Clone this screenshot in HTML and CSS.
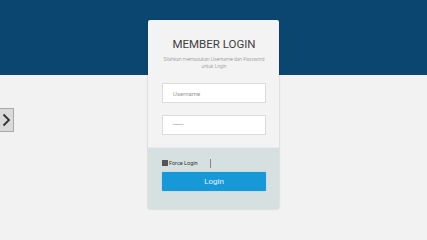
FILE: index.html
```html
<!DOCTYPE html>
<html>
<head>
<meta charset="utf-8">
<link rel="stylesheet" href="styles.css">
</head>
<body>
<div class="top"></div>
<div class="stage">
  <div class="card">
    <div class="card-body">
      <h1 class="title">MEMBER LOGIN</h1>
      <p class="sub">Silahkan memasukan Username dan Password<br>untuk Login</p>
      <div class="field"><span class="ph">Username</span></div>
      <div class="field"><span class="dots">••••••••</span></div>
    </div>
    <div class="card-foot">
      <div class="row">
        <span class="check"></span><span class="lbl">Force Login</span><span class="bar"></span>
      </div>
      <div class="btn">Login</div>
    </div>
  </div>
</div>
<div class="side">
  <svg width="9" height="14" viewBox="0 0 9 14"><path d="M1.5 1.5 L7 7 L1.5 12.5" fill="none" stroke="#333" stroke-width="1.8"/></svg>
</div>
</body>
</html>
```
FILE: styles.css
```css
html, body { margin: 0; padding: 0; }
body {
  width: 427px; height: 240px; overflow: hidden;
  background: #f2f2f2;
  font-family: Roboto, "Liberation Sans", sans-serif;
  position: relative;
}
.top { height: 75px; background: #0a4670; }
.stage {
  position: absolute; left: 0; top: 0; width: 427px;
  display: flex; justify-content: center; padding-top: 20px;
}
.card {
  width: 131px; height: 189px;
  background: #f3f3f3;
  border-radius: 2px;
  box-shadow: 0 0 2px rgba(0,0,0,0.25);
  display: flex; flex-direction: column;
}
.card-body { height: 127px; padding: 0 13px 0 14px; display: flex; flex-direction: column; align-items: center; }
.title {
  margin: 17px 0 0; font-size: 11.5px; font-weight: 400; color: #3e3e3e; letter-spacing: 0;
  line-height: 14px;
}
.sub {
  margin: 5px 0 0; font-size: 4.9px; font-weight: 300; color: #858585; text-align: center; line-height: 7px; white-space: nowrap;
}
.field {
  align-self: stretch; height: 20px; background: #fff; border: 1px solid #dcdcdc; box-sizing: border-box;
  margin-top: 13px; display: flex; align-items: center; padding-left: 10px;
}
.field + .field { margin-top: 12px; }
.ph { font-size: 6px; color: #9a9a9a; }
.dots { font-size: 3.5px; color: #555; letter-spacing: 0.1px; }
.card-foot {
  flex: 1; background: #d6e0e0; border-top: 1px solid #e6ecec;
  padding: 10px 13px 0 14px;
}
.row { display: flex; align-items: center; height: 10px; }
.check { width: 6px; height: 6px; background: #555; margin-right: 1px; }
.lbl { font-size: 5.5px; color: #333; }
.bar { width: 1px; height: 9px; background: #888; margin-left: 12px; }
.btn {
  margin-top: 4px; height: 19px; background: #1799d8; color: #e8f4fb;
  display: flex; align-items: center; justify-content: center;
  font-size: 8px; border-radius: 1px; box-shadow: 0 0 1px #5bb8e6;
}
.side {
  position: absolute; left: -1px; top: 108px; width: 13px; height: 22px;
  background: #dadada; border: 1px solid #a8a8a8;
  display: flex; align-items: center; justify-content: center;
}
```
